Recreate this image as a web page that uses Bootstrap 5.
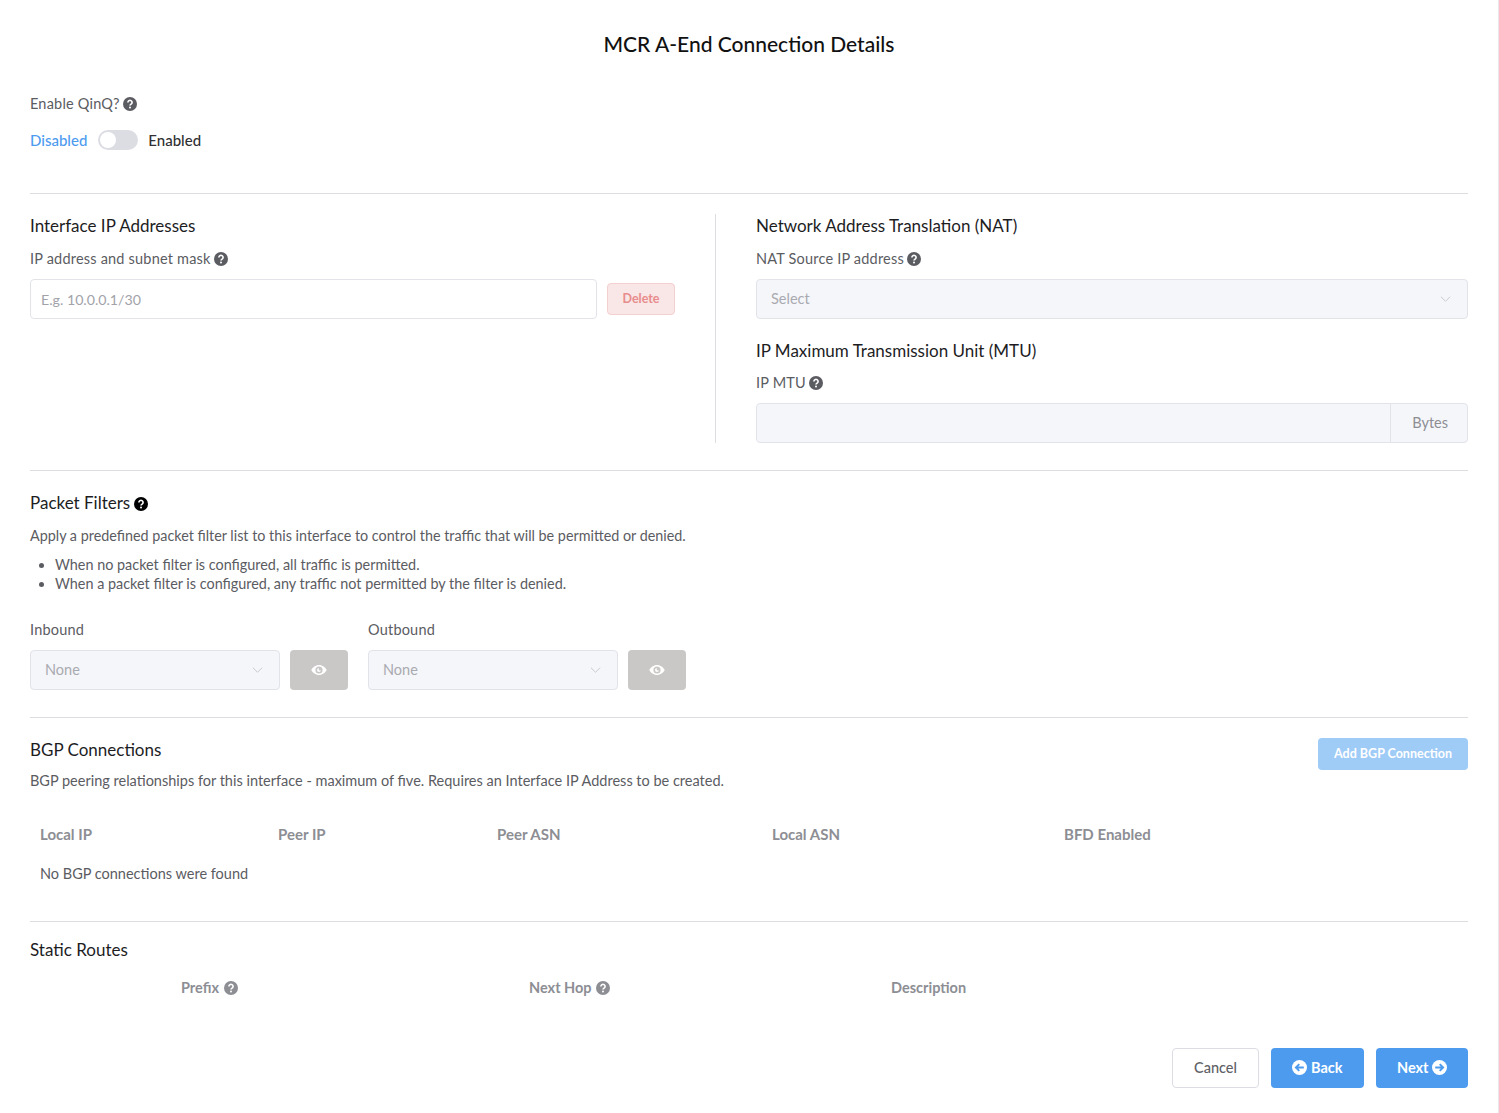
<!DOCTYPE html>
<html lang="en">
<head>
    <meta charset="UTF-8">
    <meta name="viewport" content="width=device-width, initial-scale=1.0">
    <title>MCR A-End Connection Details</title>
    <link href="https://cdn.jsdelivr.net/npm/bootstrap@5.3.0/dist/css/bootstrap.min.css" rel="stylesheet">
    <style>
        body {
            font-family: "Lato", "Liberation Sans", sans-serif;
            font-size: 14.5px;
            color: #5b5c62;
            background: #fff;
        }

        .page-wrap {
            height: 1113px;
            padding: 0 30px;
            border-right: 1px solid #e8e8ec;
            width: 1499px;
        }

        .page-title {
            font-size: 21px;
            font-weight: 500;
            line-height: 28px;
            color: #111;
            text-align: center;
            padding-top: 30px;
            margin-bottom: 36px;
        }

        .field-label {
            line-height: 20px;
            letter-spacing: .2px;
            margin-bottom: 10px;
        }

        .section-title {
            font-size: 17px;
            line-height: 24px;
            color: #1d1d1f;
            margin-bottom: 11px;
        }

        .mtu-title {
            margin-top: 20px;
            margin-bottom: 10px;
        }

        .help-icon {
            width: 14px;
            height: 14px;
            vertical-align: -2px;
            margin-left: -1px;
        }

        .qinq-row {
            font-size: 15px;
            line-height: 20px;
            font-weight: 500;
            margin-top: 16px;
            margin-bottom: 43px;
            color: #303033;
        }

        .qinq-row .state-on {
            color: #4c9bef;
        }

        .toggle-track {
            width: 40px;
            height: 20px;
            border-radius: 10px;
            background: #dcdde3;
            position: relative;
            margin: 0 10px 0 11px;
        }

        .toggle-track::after {
            content: "";
            position: absolute;
            left: 2px;
            top: 2px;
            width: 16px;
            height: 16px;
            border-radius: 50%;
            background: #fff;
        }

        .rule {
            margin: 0;
            border-top: 1px solid #dcdde0;
            opacity: 1;
        }

        .rule-after-ip {
            margin: 27px 0 20px;
        }

        .rule-after-filters {
            margin-top: 27px;
        }

        .rule-after-bgp {
            margin: 28px 0 16px;
        }

        .ip-side {
            width: 686px;
            padding-right: 40px;
            border-right: 1px solid #dcdde0;
        }

        .nat-side {
            padding-left: 40px;
            flex: 1;
        }

        .form-control.plain-input,
        .form-select.plain-select,
        .input-group-text.unit-text {
            height: 40px;
            font-size: 14.5px;
            border: 1px solid #e2e3e9;
            border-radius: 4px;
            padding-left: 14px;
            color: #a9aab0;
        }

        .form-control.plain-input {
            padding-left: 10px;
            font-size: 14.2px;
        }

        .form-control.plain-input::placeholder {
            color: #a2a3a9;
        }

        .form-control.plain-input:disabled,
        .form-select.plain-select:disabled,
        .input-group-text.unit-text {
            background-color: #f5f6fa;
        }

        .form-select.plain-select {
            background-image: url("data:image/svg+xml,%3csvg xmlns='http://www.w3.org/2000/svg' viewBox='0 0 12 8'%3e%3cpath fill='none' stroke='%23c4c5cb' d='M1 1.5l5 5 5-5'/%3e%3c/svg%3e");
            background-size: 11px 8px;
            background-position: right 16px center;
        }

        .input-group .form-control.plain-input {
            border-radius: 4px 0 0 4px;
        }

        .input-group-text.unit-text {
            border-radius: 0 4px 4px 0;
            padding: 0 19px 0 21px;
            color: #8d8e94;
        }

        .ip-row,
        .filter-field {
            gap: 10px;
        }

        .filter-row {
            gap: 20px;
        }

        .btn.btn-delete {
            width: 68px;
            height: 32px;
            padding: 0;
            font-size: 12.5px;
            font-weight: 700;
            color: #e88d8d;
            background: #f9e6e6;
            border: 1px solid #f4cfcf;
            border-radius: 4px;
            opacity: 1;
        }

        .filter-text {
            font-size: 14.35px;
            line-height: 19px;
            margin-bottom: 10px;
        }

        .filter-list {
            font-size: 14.4px;
            padding-left: 25px;
            margin: 0 0 27px;
            line-height: 19px;
        }

        .select-box {
            width: 250px;
        }

        .btn.btn-eye {
            width: 58px;
            height: 40px;
            padding: 0;
            background: #c9c8c6;
            border: 0;
            border-radius: 4px;
            opacity: 1;
        }

        .btn.btn-eye svg {
            width: 16px;
            height: 14px;
            fill: #fff;
        }

        .btn.btn-add-bgp {
            width: 150px;
            height: 32px;
            padding: 0;
            font-size: 12.5px;
            font-weight: 700;
            color: #fff;
            background: #9fcbf7;
            border: 0;
            border-radius: 4px;
            opacity: 1;
        }

        .bgp-title {
            margin-bottom: 9px;
        }

        .bgp-text {
            line-height: 19px;
        }

        .bgp-table {
            table-layout: fixed;
            margin: 25px 0 0;
        }

        .bgp-table th,
        .bgp-table td {
            border: 0;
            padding: 0 10px;
            font-size: 14.5px;
            color: #5b5c62;
            box-shadow: none;
            vertical-align: middle;
        }

        .bgp-table th {
            height: 39px;
            font-size: 15px;
            font-weight: 700;
            color: #8d8e94;
        }

        .bgp-table td {
            height: 39px;
        }

        .routes-title {
            margin-bottom: 16px;
        }

        .route-head {
            display: grid;
            grid-template-columns: 151px 348px 362px 1fr;
            font-weight: 700;
            color: #8d8e94;
            line-height: 20px;
        }

        .route-head .help-icon {
            margin-left: 1px;
        }

        .step-row {
            gap: 12px;
            margin-top: 50px;
        }

        .btn.btn-cancel,
        .btn.btn-step {
            height: 40px;
            font-size: 14.5px;
            border-radius: 4px;
            padding: 0;
        }

        .btn.btn-cancel {
            width: 87px;
            font-weight: 500;
            color: #606166;
            background: #fff;
            border: 1px solid #dcdde3;
        }

        .btn.btn-step {
            width: 92px;
            font-weight: 700;
            color: #fff;
            background: #4c9bef;
            border: 0;
        }

        .btn.btn-step.step-back {
            width: 93px;
        }

        .btn-step svg {
            width: 15px;
            height: 15px;
            vertical-align: -2px;
        }
    </style>
</head>
<body>
    <svg width="0" height="0" class="position-absolute">
        <symbol id="help" viewBox="0 0 14 14">
            <circle cx="7" cy="7" r="7" fill="currentColor"/>
            <path d="M4.9 5.4a2.1 2 0 1 1 3.2 1.7C7.3 7.6 7 7.900 7 8.600" fill="none" stroke="#fff" stroke-width="1.6"/>
            <circle cx="7" cy="10.6" r="1" fill="#fff"/>
        </symbol>
        <symbol id="eye" viewBox="0 0 16 14">
            <path fill-rule="evenodd" d="M8 2C4.5 2 1.7 4.4.3 7c1.400 2.600 4.200 5 7.700 5s6.300-2.400 7.700-5C14.300 4.400 11.500 2 8 2zm0 8.600A3.600 3.600 0 1 1 8 3.400a3.600 3.600 0 0 1 0 7.200zM8 5a2 2 0 1 0 2 2 1 1 0 0 1-2-2z"/>
        </symbol>
    </svg>
    <div class="page-wrap">
        <div class="page-title">MCR A-End Connection Details</div>

        <div class="field-label mb-0">Enable QinQ? <svg class="help-icon"><use href="#help"/></svg></div>
        <div class="qinq-row d-flex align-items-center">
            <span class="state-on">Disabled</span>
            <span class="toggle-track"></span>
            <span>Enabled</span>
        </div>
        <hr class="rule">

        <div class="d-flex mt-3 pt-1">
            <div class="ip-side">
                <div class="section-title">Interface IP Addresses</div>
                <div class="field-label">IP address and subnet mask <svg class="help-icon"><use href="#help"/></svg></div>
                <div class="ip-row d-flex align-items-center">
                    <input type="text" class="form-control plain-input" placeholder="E.g. 10.0.0.1/30">
                    <button class="btn btn-delete flex-shrink-0" disabled>Delete</button>
                </div>
            </div>
            <div class="nat-side">
                <div class="section-title">Network Address Translation (NAT)</div>
                <div class="field-label">NAT Source IP address <svg class="help-icon"><use href="#help"/></svg></div>
                <select class="form-select plain-select" disabled><option>Select</option></select>
                <div class="section-title mtu-title">IP Maximum Transmission Unit (MTU)</div>
                <div class="field-label">IP MTU <svg class="help-icon"><use href="#help"/></svg></div>
                <div class="input-group">
                    <input type="text" class="form-control plain-input" disabled>
                    <span class="input-group-text unit-text">Bytes</span>
                </div>
            </div>
        </div>

        <hr class="rule rule-after-ip">

        <div class="section-title">Packet Filters <svg class="help-icon text-black"><use href="#help"/></svg></div>
        <div class="filter-text">Apply a predefined packet filter list to this interface to control the traffic that will be permitted or denied.</div>
        <ul class="filter-list">
            <li>When no packet filter is configured, all traffic is permitted.</li>
            <li>When a packet filter is configured, any traffic not permitted by the filter is denied.</li>
        </ul>
        <div class="filter-row d-flex">
            <div>
                <div class="field-label">Inbound</div>
                <div class="filter-field d-flex">
                    <select class="form-select plain-select select-box" disabled><option>None</option></select>
                    <button class="btn btn-eye d-flex align-items-center justify-content-center" disabled><svg><use href="#eye"/></svg></button>
                </div>
            </div>
            <div>
                <div class="field-label">Outbound</div>
                <div class="filter-field d-flex">
                    <select class="form-select plain-select select-box" disabled><option>None</option></select>
                    <button class="btn btn-eye d-flex align-items-center justify-content-center" disabled><svg><use href="#eye"/></svg></button>
                </div>
            </div>
        </div>

        <hr class="rule rule-after-filters">

        <div class="d-flex justify-content-between align-items-start pt-3">
            <div>
                <div class="section-title bgp-title pt-1">BGP Connections</div>
                <div class="bgp-text">BGP peering relationships for this interface - maximum of five. Requires an Interface IP Address to be created.</div>
            </div>
            <button class="btn btn-add-bgp mt-1" disabled>Add BGP Connection</button>
        </div>

        <table class="table bgp-table">
            <colgroup>
                <col style="width: 238px"><col style="width: 219px"><col style="width: 275px"><col style="width: 292px"><col>
            </colgroup>
            <thead>
                <tr><th>Local IP</th><th>Peer IP</th><th>Peer ASN</th><th>Local ASN</th><th>BFD Enabled</th></tr>
            </thead>
            <tbody>
                <tr><td colspan="5">No BGP connections were found</td></tr>
            </tbody>
        </table>

        <hr class="rule rule-after-bgp">

        <div class="section-title routes-title">Static Routes</div>
        <div class="route-head">
            <span></span>
            <span>Prefix <svg class="help-icon"><use href="#help"/></svg></span>
            <span>Next Hop <svg class="help-icon"><use href="#help"/></svg></span>
            <span>Description</span>
        </div>

        <div class="step-row d-flex justify-content-end">
            <button class="btn btn-cancel">Cancel</button>
            <button class="btn btn-step step-back">
                <svg viewBox="0 0 14 14"><circle cx="7" cy="7" r="7" fill="#fff"/><path d="M11 7H3.800M6.800 3.800L3.600 7l3.200 3.200" fill="none" stroke="#4c9bef" stroke-width="1.800"/></svg> Back
            </button>
            <button class="btn btn-step">
                Next <svg viewBox="0 0 14 14"><circle cx="7" cy="7" r="7" fill="#fff"/><path d="M3 7h7.200M7.200 3.800L10.400 7l-3.200 3.200" fill="none" stroke="#4c9bef" stroke-width="1.800"/></svg>
            </button>
        </div>
    </div>
</body>
</html>
